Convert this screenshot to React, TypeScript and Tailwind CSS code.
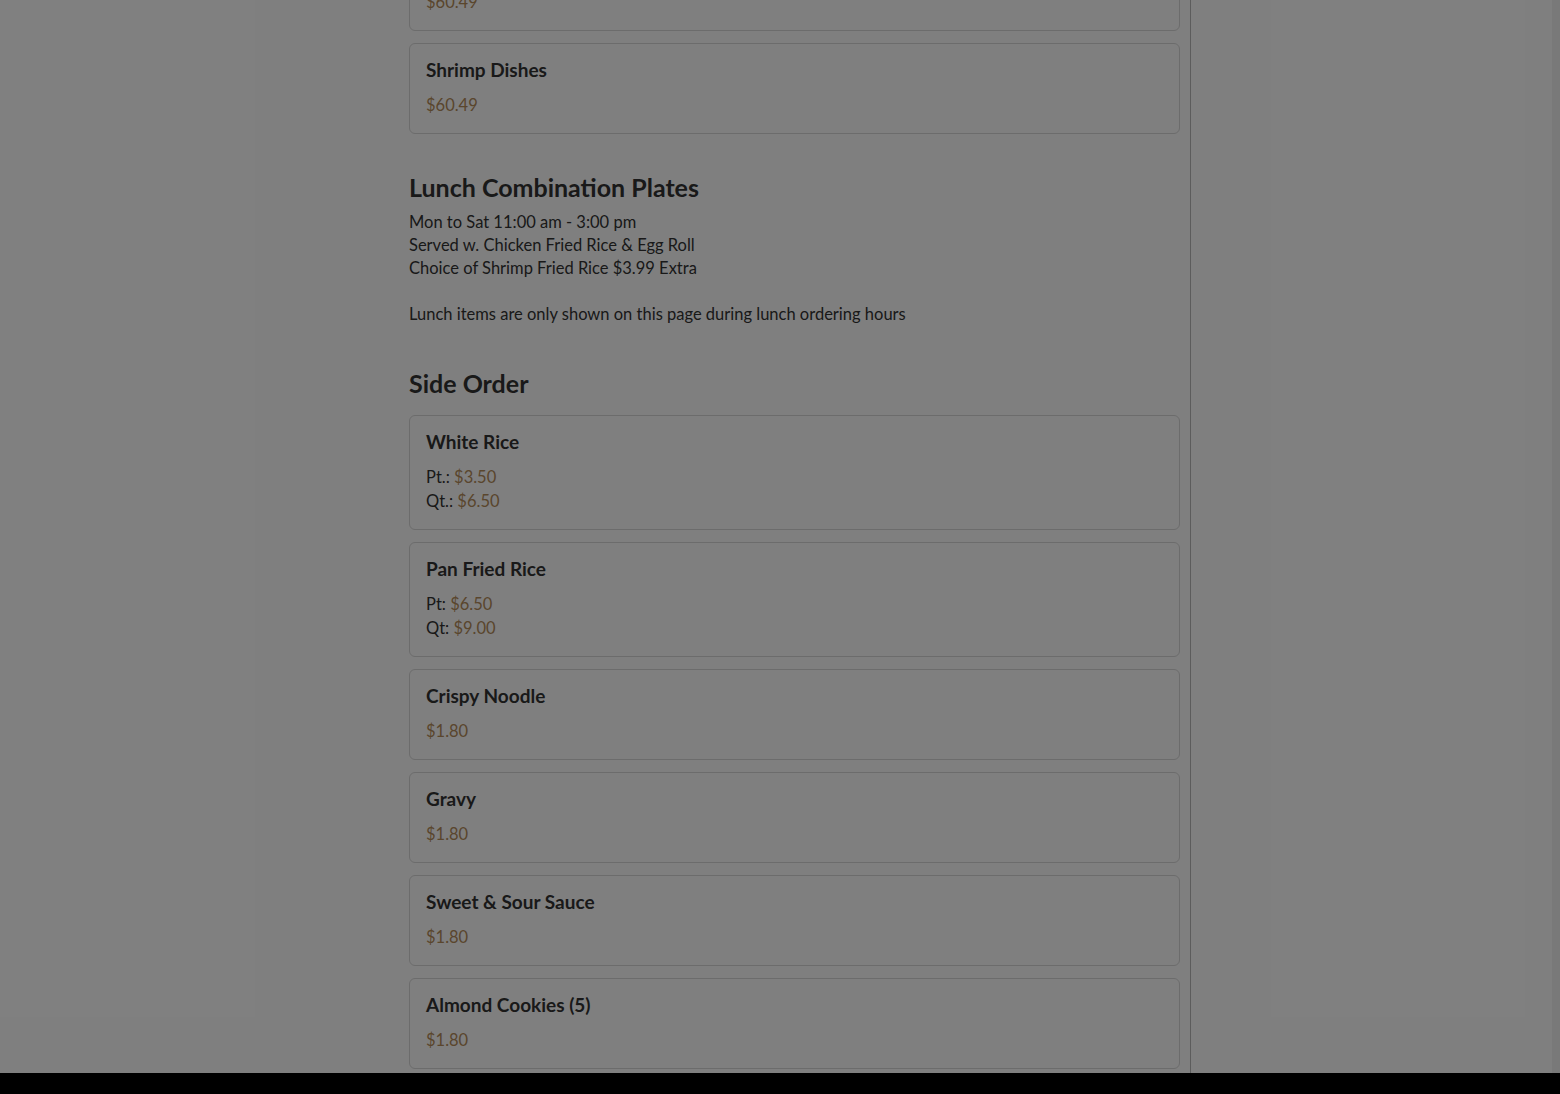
import React from 'react';

interface Price {
  label?: string;
  value: string;
}

interface MenuItem {
  name: string;
  prices: Price[];
}

const sideOrder: MenuItem[] = [
  { name: 'White Rice', prices: [{ label: 'Pt.:', value: '$3.50' }, { label: 'Qt.:', value: '$6.50' }] },
  { name: 'Pan Fried Rice', prices: [{ label: 'Pt:', value: '$6.50' }, { label: 'Qt:', value: '$9.00' }] },
  { name: 'Crispy Noodle', prices: [{ value: '$1.80' }] },
  { name: 'Gravy', prices: [{ value: '$1.80' }] },
  { name: 'Sweet & Sour Sauce', prices: [{ value: '$1.80' }] },
  { name: 'Almond Cookies (5)', prices: [{ value: '$1.80' }] },
];

const font = { fontFamily: 'Lato, "Noto Sans", sans-serif' };

const ItemCard: React.FC<{ item: MenuItem }> = ({ item }) => (
  <div className="mb-[12px] rounded-[6px] border border-[#d8d8d8] bg-white px-[16px] pt-[14px] pb-[16px]">
    <h3 className="text-[19px] font-bold leading-[23px] text-[#333]">{item.name}</h3>
    <div className="mt-[12px] text-[16.5px] leading-[24px]">
      {item.prices.map((p, i) => (
        <div key={i} className="text-[#333]">
          {p.label && <span>{p.label} </span>}
          <span className="text-[#b48c5a]">{p.value}</span>
        </div>
      ))}
    </div>
  </div>
);

export default function App() {
  return (
    <div className="relative h-[1094px] overflow-hidden bg-white" style={font}>
      <div className="flex h-[1073px]">
        <div className="w-[409px] shrink-0" />
        <div className="flex w-[782px] shrink-0 flex-col border-r border-[#b8b8b8] pr-[10px]">
          <div className="-mt-[60px]">
            <ItemCard item={{ name: 'Shrimp Dishes', prices: [{ value: '$60.49' }] }} />
            <ItemCard item={{ name: 'Shrimp Dishes', prices: [{ value: '$60.49' }] }} />
          </div>

          <h2 className="mt-[25px] text-[25px] font-bold leading-[32px] text-[#333]">Lunch Combination Plates</h2>
          <div className="mt-[8px] text-[16.5px] leading-[23px] text-[#333]">
            <p>Mon to Sat 11:00 am - 3:00 pm</p>
            <p>Served w. Chicken Fried Rice &amp; Egg Roll</p>
            <p>Choice of Shrimp Fried Rice $3.99 Extra</p>
            <p>&nbsp;</p>
            <p>Lunch items are only shown on this page during lunch ordering hours</p>
          </div>

          <h2 className="mt-[41px] text-[25px] font-bold leading-[32px] text-[#333]">Side Order</h2>
          <div className="mt-[16px]">
            {sideOrder.map((item) => (
              <ItemCard key={item.name} item={item} />
            ))}
          </div>
        </div>
        <div className="flex-1" />
        <div className="w-[8px] shrink-0 bg-[#f2f2f2]" />
      </div>
      <div className="h-[21px] bg-black" />

      {/* modal backdrop */}
      <div className="absolute inset-0 bg-black/50" />
    </div>
  );
}
